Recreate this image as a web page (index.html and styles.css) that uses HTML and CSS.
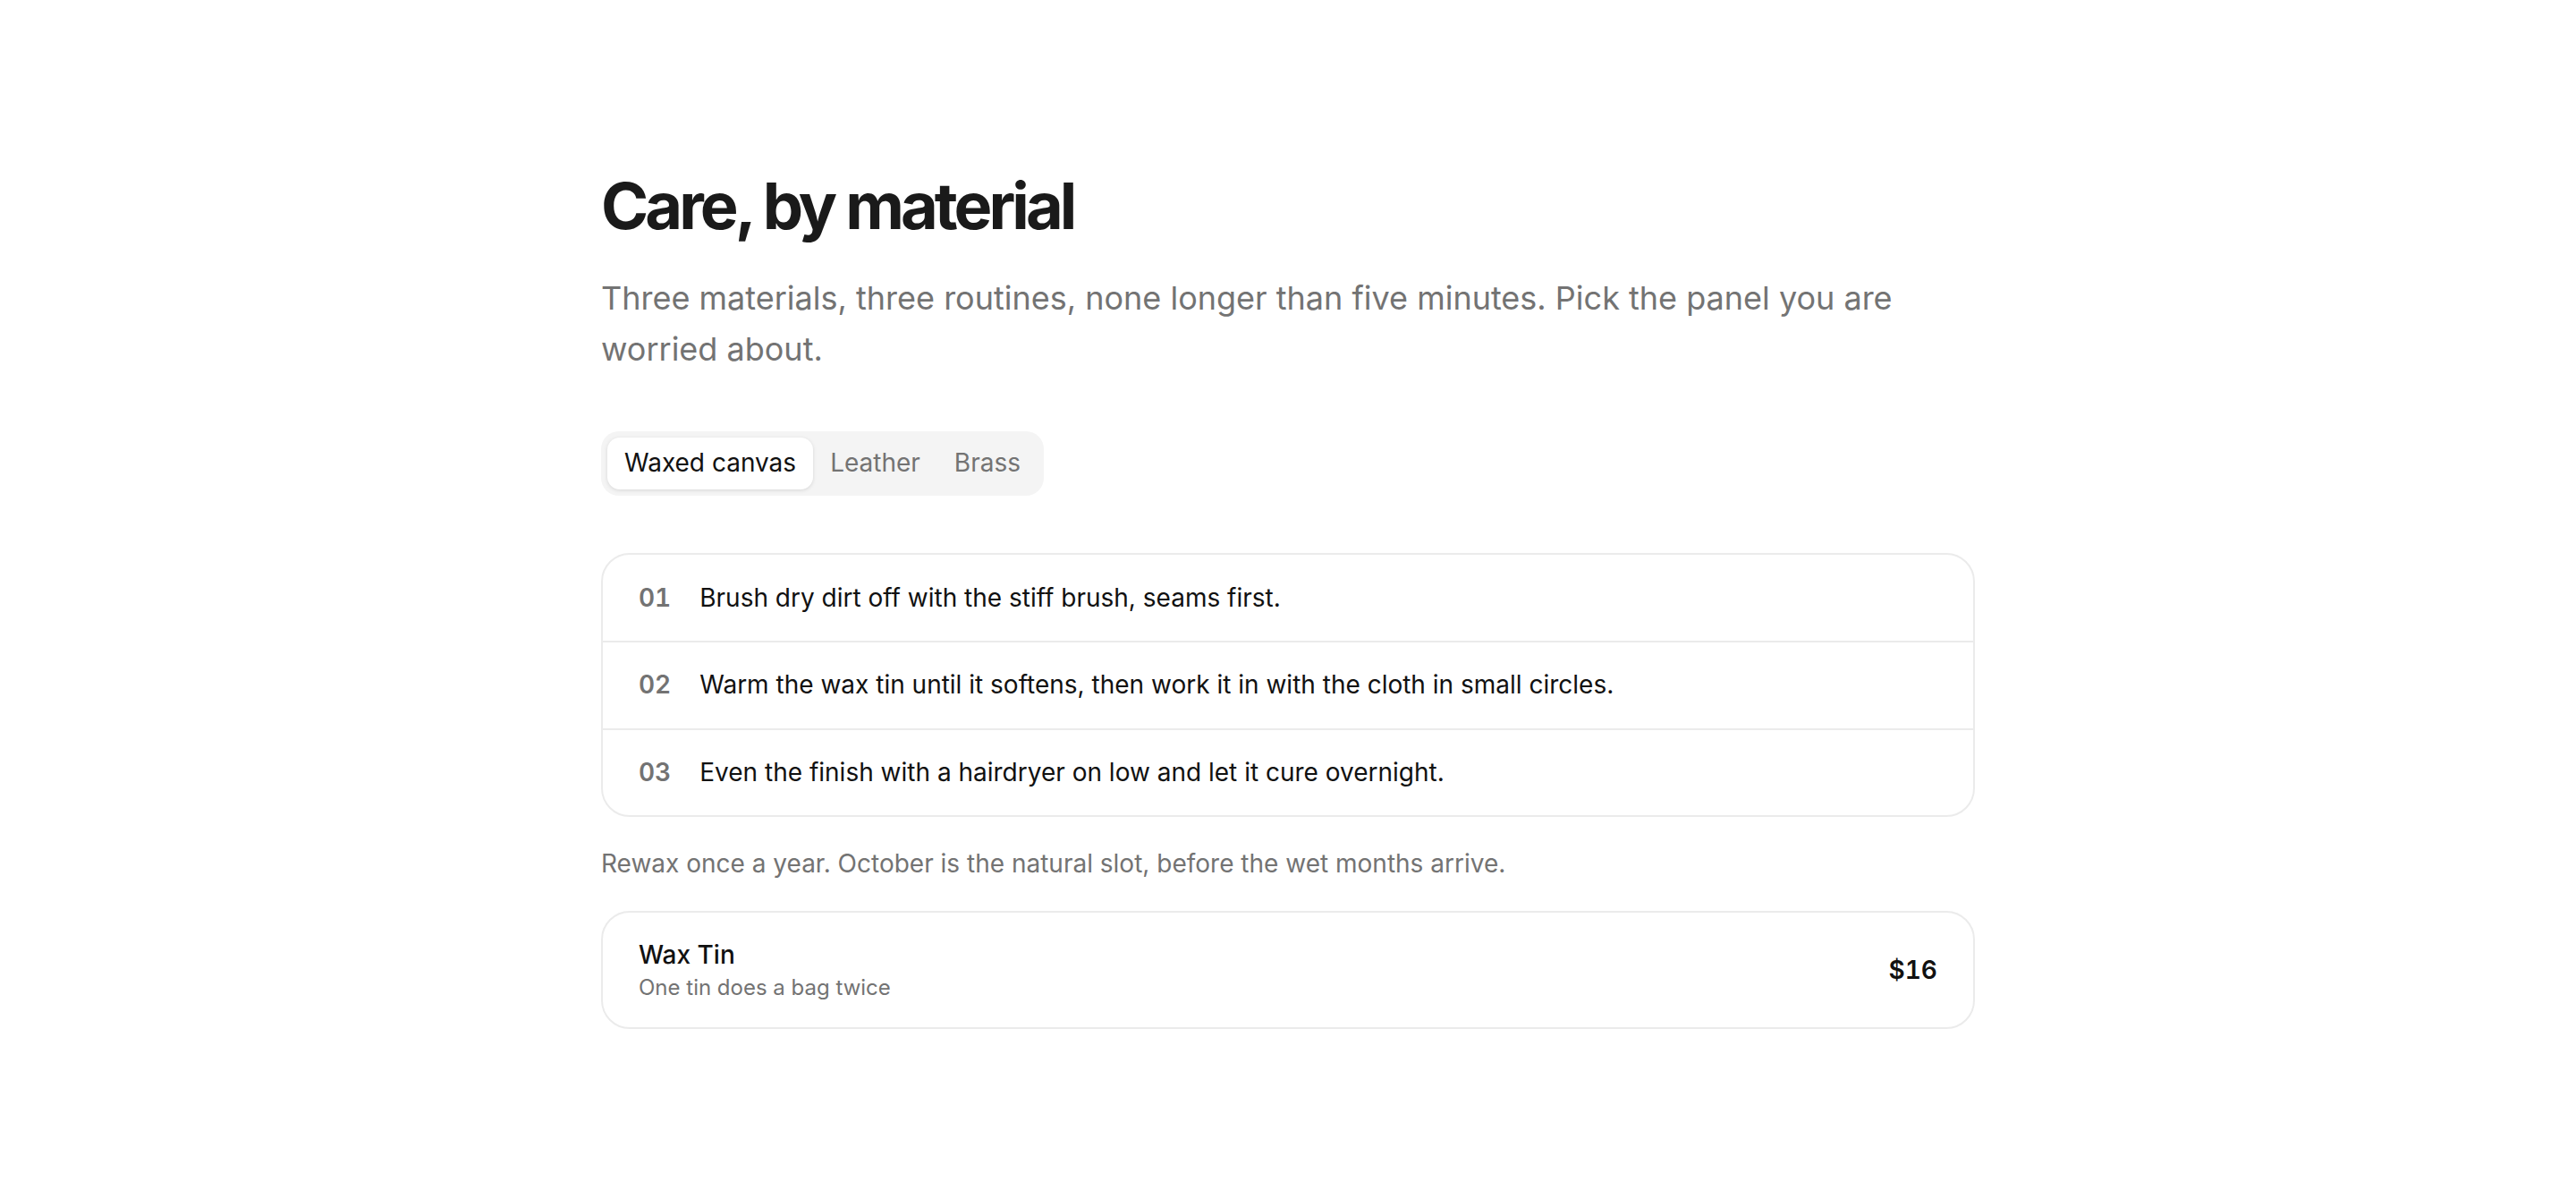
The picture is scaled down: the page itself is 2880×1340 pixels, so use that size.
FILE: index.html
```html
<!DOCTYPE html>
<html lang="en">
<head>
    <meta charset="UTF-8">
    <meta name="viewport" content="width=device-width, initial-scale=1.0">
    <title>Care, by material</title>
    <link rel="stylesheet" href="styles.css">
</head>
<body>
    <main class="container">
        <header class="header">
            <h1>Care, by material</h1>
            <p>Three materials, three routines, none longer than five minutes. Pick the panel you are worried about.</p>
        </header>

        <div class="tabs" role="tablist">
            <button class="tab active" role="tab" aria-selected="true">Waxed canvas</button>
            <button class="tab" role="tab" aria-selected="false">Leather</button>
            <button class="tab" role="tab" aria-selected="false">Brass</button>
        </div>

        <section class="panel" role="tabpanel">
            <ol class="steps">
                <li class="step">
                    <span class="step-num">01</span>
                    <span class="step-text">Brush dry dirt off with the stiff brush, seams first.</span>
                </li>
                <li class="step">
                    <span class="step-num">02</span>
                    <span class="step-text">Warm the wax tin until it softens, then work it in with the cloth in small circles.</span>
                </li>
                <li class="step">
                    <span class="step-num">03</span>
                    <span class="step-text">Even the finish with a hairdryer on low and let it cure overnight.</span>
                </li>
            </ol>

            <p class="note">Rewax once a year. October is the natural slot, before the wet months arrive.</p>

            <div class="product">
                <div class="product-info">
                    <span class="product-name">Wax Tin</span>
                    <span class="product-desc">One tin does a bag twice</span>
                </div>
                <span class="product-price">$16</span>
            </div>
        </section>
    </main>

    <script>
        // Switch the active tab
        document.querySelectorAll('.tab').forEach(function(tab) {
            tab.addEventListener('click', function() {
                document.querySelectorAll('.tab').forEach(function(t) {
                    t.classList.remove('active');
                    t.setAttribute('aria-selected', 'false');
                });
                tab.classList.add('active');
                tab.setAttribute('aria-selected', 'true');
            });
        });
    </script>
</body>
</html>
```

FILE: styles.css
```css
:root {
    --text-color: #111111;
    --muted-color: #737373;
    --border-color: #ebebeb;
    --tab-bg: #f4f4f4;
    --radius: 32px;
}

* {
    margin: 0;
    padding: 0;
    box-sizing: border-box;
}

body {
    font-family: 'Inter', 'Noto Sans', sans-serif;
    background: #ffffff;
    color: var(--text-color);
    font-size: 28px;
    line-height: 1.6;
}

.container {
    max-width: 1536px;
    margin: 0 auto;
    padding: 187px 0 120px;
}

.header h1 {
    font-size: 72px;
    line-height: 1.2;
    font-weight: 700;
    letter-spacing: -0.055em;
    color: #1a1a1a;
    margin-bottom: 32px;
}

.header p {
    font-size: 36px;
    line-height: 1.56;
    color: var(--muted-color);
}

/* Segmented tabs */
.tabs {
    display: inline-flex;
    padding: 7px;
    margin-top: 64px;
    background: var(--tab-bg);
    border-radius: 20px;
}

.tab {
    font-family: inherit;
    font-size: 28px;
    line-height: 1.55;
    padding: 7.5px 19px;
    border: none;
    border-radius: 14px;
    background: transparent;
    color: var(--muted-color);
    cursor: pointer;
}

.tab.active {
    background: #ffffff;
    color: var(--text-color);
    box-shadow: 0 1px 4px rgba(0, 0, 0, 0.12);
}

.panel {
    margin-top: 64px;
}

.steps {
    list-style: none;
    border: 2px solid var(--border-color);
    border-radius: var(--radius);
}

.step {
    display: flex;
    align-items: center;
    gap: 32px;
    padding: 25.5px 40px;
}

.step + .step {
    border-top: 2px solid var(--border-color);
}

.step-num {
    font-weight: 600;
    color: var(--muted-color);
    font-variant-numeric: tabular-nums;
}

.note {
    margin-top: 30px;
    color: var(--muted-color);
}

.product {
    display: flex;
    align-items: center;
    justify-content: space-between;
    margin-top: 30px;
    padding: 28px 40px 27px;
    border: 2px solid var(--border-color);
    border-radius: var(--radius);
}

.product-info {
    display: flex;
    flex-direction: column;
}

.product-name {
    font-weight: 500;
    line-height: 1.4;
}

.product-desc {
    font-size: 24px;
    line-height: 1.4;
    color: var(--muted-color);
}

.product-price {
    font-weight: 600;
    font-variant-numeric: tabular-nums;
}
```
